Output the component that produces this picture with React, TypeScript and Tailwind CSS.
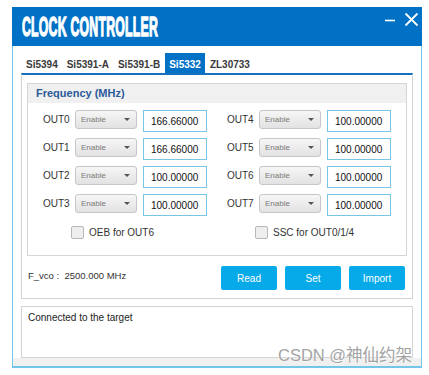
import React from "react";

const font = "font-['Liberation_Sans',Arial,sans-serif]";

function Dropdown() {
  return (
    <div className="w-[62px] h-[19px] flex items-center justify-between pl-[5px] pr-[6px] border border-[#c6c6c6] rounded-[3px] bg-gradient-to-b from-[#f6f6f6] to-[#e2e2e2]">
      <span className="text-[8px] leading-none text-[#7a7a7a]">Enable</span>
      <span className="w-0 h-0 border-l-[3px] border-r-[3px] border-t-[3px] border-l-transparent border-r-transparent border-t-[#555]" />
    </div>
  );
}

function Row({ label, value }: { label: string; value: string }) {
  return (
    <div className="flex items-start h-[22px]">
      <div className="w-[32px] pt-[3px] text-[10px] leading-[14px] text-[#333]">{label}</div>
      <Dropdown />
      <div className="ml-[6px] w-[64px] h-[22px] border border-[#78c5e6] bg-white flex items-center pl-[7px] text-[10px] text-[#111]">
        {value}
      </div>
    </div>
  );
}

function Check({ label }: { label: string }) {
  return (
    <div className="flex items-center pl-[28px] h-[13px]">
      <div className="w-[13px] h-[13px] border border-[#b8b8b8] rounded-[2px] bg-[#eeeeee]" />
      <span className="ml-[5px] text-[10px] text-[#333] leading-none">{label}</span>
    </div>
  );
}

function Btn({ label }: { label: string }) {
  return (
    <div className="w-[56px] h-[24px] rounded-[2px] bg-[#06aae9] text-white text-[10px] flex items-center justify-center">
      {label}
    </div>
  );
}

export default function App() {
  const tabs = ["Si5394", "Si5391-A", "Si5391-B", "Si5332", "ZL30733"];
  return (
    <div className={`w-[429px] h-[375px] bg-white relative overflow-hidden ${font}`}>
      <div className="ml-[12px] mt-[7px] w-[410px]">
        {/* title bar */}
        <div className="h-[39px] bg-[#0071c5] flex items-center pl-[10px] pr-[4px] relative">
          <div className="text-[27px] font-bold text-white leading-none scale-x-[0.455] origin-left [-webkit-text-stroke:1.4px_white] whitespace-nowrap tracking-[0.5px] pt-[1px]">
            CLOCK CONTROLLER
          </div>
          <div className="absolute right-[3px] top-[5px] flex items-center gap-[8px]">
            <svg width="12" height="16" viewBox="0 0 12 16">
              <line x1="1" y1="8.5" x2="11" y2="8.5" stroke="white" strokeWidth="1.6" />
            </svg>
            <svg width="15" height="16" viewBox="0 0 15 16">
              <line x1="1.5" y1="1.5" x2="13.5" y2="13.5" stroke="white" strokeWidth="1.8" />
              <line x1="13.5" y1="1.5" x2="1.5" y2="13.5" stroke="white" strokeWidth="1.8" />
            </svg>
          </div>
        </div>
        {/* body */}
        <div className="border-x border-b-2 border-[#72c6e8] bg-white">
          <div className="px-[8px] pt-[7px]">
            {/* tabs */}
            <div className="flex pl-[1px] gap-[1px] h-[20px]">
              {tabs.map((t) => (
                <div
                  key={t}
                  className={`px-[4px] h-[20px] flex items-center pt-[3px] text-[10px] font-bold ${
                    t === "Si5332" ? "bg-[#0071c5] text-white" : "text-[#3a3a3a]"
                  }`}
                >
                  {t}
                </div>
              ))}
            </div>
            {/* tab panel */}
            <div className="border-t-2 border-t-[#1570c0] border-x border-b border-x-[#d3d3d3] border-b-[#d3d3d3] pt-[8px] pb-[8px]">
              <div className="mx-[5px] border border-[#d6d6d6]">
                <div className="h-[19px] bg-[#f0f0f0] flex items-center pl-[8px] text-[11px] font-bold text-[#2a5a9a]">
                  Frequency (MHz)
                </div>
                <div className="px-[15px] pt-[7px] pb-[16px]">
                  <div className="grid grid-cols-2 gap-x-[20px] gap-y-[6px]">
                    <Row label="OUT0" value="166.66000" />
                    <Row label="OUT4" value="100.00000" />
                    <Row label="OUT1" value="166.66000" />
                    <Row label="OUT5" value="100.00000" />
                    <Row label="OUT2" value="100.00000" />
                    <Row label="OUT6" value="100.00000" />
                    <Row label="OUT3" value="100.00000" />
                    <Row label="OUT7" value="100.00000" />
                  </div>
                  <div className="grid grid-cols-2 gap-x-[20px] mt-[10px]">
                    <Check label="OEB for OUT6" />
                    <Check label="SSC for OUT0/1/4" />
                  </div>
                </div>
              </div>
              <div className="mt-[10px] flex items-center pl-[6px] pr-[7px]">
                <div className="text-[9.5px] text-[#333] pb-[4px] whitespace-pre">F_vco :  2500.000 MHz</div>
                <div className="ml-auto flex gap-[8px]">
                  <Btn label="Read" />
                  <Btn label="Set" />
                  <Btn label="Import" />
                </div>
              </div>
            </div>
            {/* log */}
            <div className="mt-[7px] h-[52px] border border-[#d3d3d3] pl-[6px] pt-[4px]">
              <div className="text-[10px] leading-[14px] text-[#222]">Connected to the target</div>
            </div>
          </div>
          <div className="h-[8px] bg-[#f0f0f0]" />
        </div>
      </div>
      {/* watermark */}
      <div className="absolute left-[278px] top-[345px] text-[16.5px] leading-[20px] text-[#a3a3a3] font-['Liberation_Sans','Noto_Sans_CJK_SC',sans-serif] whitespace-nowrap [text-shadow:0_0_2px_white,0_0_2px_white]">
        CSDN @神仙约架
      </div>
    </div>
  );
}
